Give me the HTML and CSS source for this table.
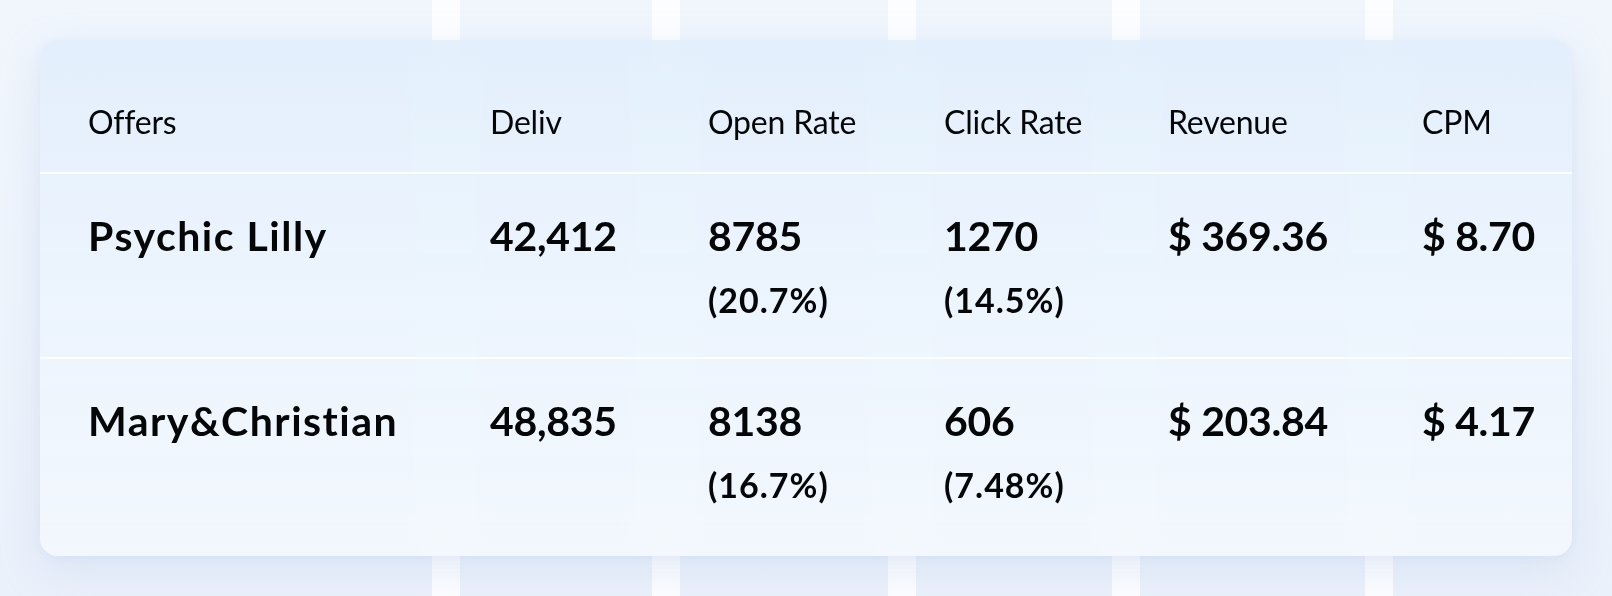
FILE: index.html
```html
<!DOCTYPE html>
<html lang="en">
<head>
<meta charset="utf-8">
<title>Offers</title>
<link rel="stylesheet" href="styles.css">
</head>
<body>
<div class="backdrop">
  <div class="bg-col c1"></div>
  <div class="bg-col c2"></div>
  <div class="bg-col c3"></div>
  <div class="bg-col c4"></div>
  <div class="bg-col c5"></div>
  <div class="bg-col c6"></div>
</div>
<main class="stage">
  <section class="card">
    <div class="row head">
      <div class="cell">Offers</div>
      <div class="cell">Deliv</div>
      <div class="cell">Open Rate</div>
      <div class="cell">Click Rate</div>
      <div class="cell">Revenue</div>
      <div class="cell">CPM</div>
    </div>
    <div class="row body r1">
      <div class="cell"><span class="main name">Psychic Lilly</span></div>
      <div class="cell"><span class="main">42,412</span></div>
      <div class="cell"><span class="main">8785</span><span class="sub">(20.7%)</span></div>
      <div class="cell"><span class="main">1270</span><span class="sub">(14.5%)</span></div>
      <div class="cell"><span class="main">$ 369.36</span></div>
      <div class="cell"><span class="main">$ 8.70</span></div>
    </div>
    <div class="row body r2">
      <div class="cell"><span class="main name">Mary&amp;Christian</span></div>
      <div class="cell"><span class="main">48,835</span></div>
      <div class="cell"><span class="main">8138</span><span class="sub">(16.7%)</span></div>
      <div class="cell"><span class="main">606</span><span class="sub">(7.48%)</span></div>
      <div class="cell"><span class="main">$ 203.84</span></div>
      <div class="cell"><span class="main">$ 4.17</span></div>
    </div>
  </section>
</main>
</body>
</html>
```
FILE: styles.css
```css
* { box-sizing: border-box; }
html, body { margin: 0; padding: 0; }
body {
  width: 1612px;
  height: 596px;
  overflow: hidden;
  background: #eff5fd;
  font-family: "Lato", "Inter", sans-serif;
  color: #050608;
  position: relative;
}
.backdrop {
  position: absolute;
  inset: 0;
  display: grid;
  grid-template-columns: 432px 192px 208px 196px 225px 1fr;
  column-gap: 28px;
  background: #fcfdff;
}
.bg-col {
  background: linear-gradient(180deg, #f1f6fd 0%, #eef4fc 50%, #ebf1fb 100%);
}
.stage {
  position: relative;
  padding: 40px 40px 0 40px;
}
.card {
  width: 1532px;
  height: 516px;
  border-radius: 18px;
  overflow: hidden;
  background: linear-gradient(180deg, rgba(225,238,252,0.9) 0%, rgba(233,243,253,0.9) 35%, rgba(243,248,254,0.92) 100%);
  backdrop-filter: blur(24px);
  box-shadow: 0 14px 40px rgba(170, 190, 225, 0.28), 0 2px 8px rgba(170,190,225,0.12);
}
.row {
  display: grid;
  grid-template-columns: 402px 218px 236px 224px 254px 1fr;
  padding-left: 48px;
}
.head {
  height: 134px;
  padding-top: 62px;
  border-bottom: 2px solid rgba(255,255,255,0.85);
  font-size: 32px;
  line-height: 40px;
  font-weight: 400;
  letter-spacing: -0.2px;
}
.body {
  padding-top: 38px;
}
.r1 {
  height: 185px;
  border-bottom: 2px solid rgba(255,255,255,0.85);
}
.r2 {
  height: 197px;
}
.cell {
  display: flex;
  flex-direction: column;
  align-items: flex-start;
}
.main {
  font-size: 41px;
  line-height: 48px;
  font-weight: 700;
  letter-spacing: -0.3px;
}
.main.name {
  letter-spacing: 1.5px;
}
.sub {
  margin-top: 21px;
  font-size: 34px;
  line-height: 38px;
  font-weight: 700;
  letter-spacing: 1px;
}
```
